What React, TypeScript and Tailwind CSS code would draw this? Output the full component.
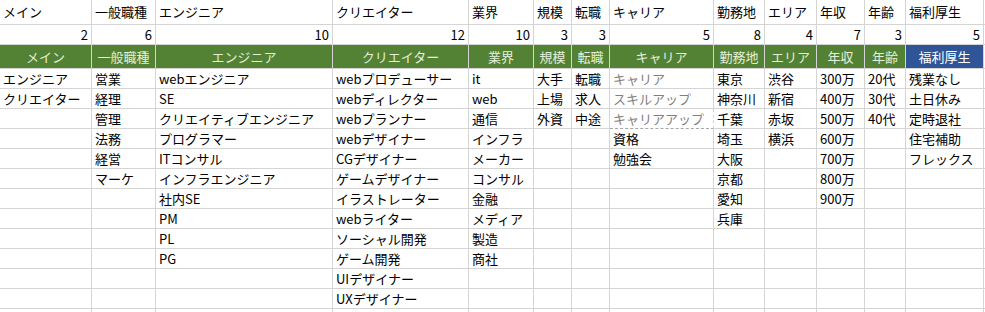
import React from 'react';

/** One column of the sheet: its title and the values listed under it. */
interface Column {
  title: string;
  items: string[];
  muted?: number; // number of leading items drawn in grey
}

const COLUMNS: Column[] = [
  { title: 'メイン', items: ['エンジニア', 'クリエイター'] },
  { title: '一般職種', items: ['営業', '経理', '管理', '法務', '経営', 'マーケ'] },
  {
    title: 'エンジニア',
    items: ['webエンジニア', 'SE', 'クリエイティブエンジニア', 'プログラマー', 'ITコンサル', 'インフラエンジニア', '社内SE', 'PM', 'PL', 'PG']
  },
  {
    title: 'クリエイター',
    items: [
      'webプロデューサー',
      'webディレクター',
      'webプランナー',
      'webデザイナー',
      'CGデザイナー',
      'ゲームデザイナー',
      'イラストレーター',
      'webライター',
      'ソーシャル開発',
      'ゲーム開発',
      'UIデザイナー',
      'UXデザイナー'
    ]
  },
  { title: '業界', items: ['it', 'web', '通信', 'インフラ', 'メーカー', 'コンサル', '金融', 'メディア', '製造', '商社'] },
  { title: '規模', items: ['大手', '上場', '外資'] },
  { title: '転職', items: ['転職', '求人', '中途'] },
  { title: 'キャリア', items: ['キャリア', 'スキルアップ', 'キャリアアップ', '資格', '勉強会'], muted: 3 },
  { title: '勤務地', items: ['東京', '神奈川', '千葉', '埼玉', '大阪', '京都', '愛知', '兵庫'] },
  { title: 'エリア', items: ['渋谷', '新宿', '赤坂', '横浜'] },
  { title: '年収', items: ['300万', '400万', '500万', '600万', '700万', '800万', '900万'] },
  { title: '年齢', items: ['20代', '30代', '40代'] },
  { title: '福利厚生', items: ['残業なし', '土日休み', '定時退社', '住宅補助', 'フレックス'] }
];

const DATA_ROWS = 13;

const cell = 'flex items-center border-r border-b border-[#d4d4d4] px-[3px] whitespace-nowrap overflow-hidden';

export default function App() {
  return (
    <div
      className="h-[312px] w-[985px] overflow-hidden bg-white text-[13px] text-black"
      style={{ fontFamily: '"Noto Sans CJK JP", "Noto Sans", sans-serif' }}
    >
      <div className="grid grid-cols-[92px_64px_177px_136px_65px_38px_38px_104px_51px_52px_48px_41px_78px_1fr] grid-rows-[25px_20px_24px_repeat(13,20px)]">
        {/* titles */}
        {COLUMNS.map((col) => (
          <div key={`t-${col.title}`} className={cell}>
            {col.title}
          </div>
        ))}
        <div className={cell} />

        {/* counts */}
        {COLUMNS.map((col) => (
          <div key={`c-${col.title}`} className={`${cell} justify-end`}>
            {col.items.length}
          </div>
        ))}
        <div className={cell} />

        {/* coloured header row */}
        {COLUMNS.map((col, i) => {
          const last = i === COLUMNS.length - 1;
          return (
            <div
              key={`h-${col.title}`}
              className={`${cell} justify-center ${
                last
                  ? 'bg-[#2f5597] border-[#2f5597] text-white'
                  : 'bg-[#548235] border-[#548235] text-[#e2efda]'
              }`}
            >
              {col.title}
            </div>
          );
        })}
        <div className={cell} />

        {/* values */}
        {Array.from({ length: DATA_ROWS }).map((_, r) => (
          <React.Fragment key={`r-${r}`}>
            {COLUMNS.map((col) => {
              const value = col.items[r] ?? '';
              const muted = col.muted !== undefined && r < col.muted;
              const dashed = col.title === 'キャリア' && r === 2;
              return (
                <div
                  key={`${col.title}-${r}`}
                  className={`${cell} ${muted ? 'text-[#7f7f7f]' : ''} ${
                    dashed ? 'border-b-[#a6a6a6] border-dashed border-r-[#d4d4d4]' : ''
                  }`}
                >
                  {value}
                </div>
              );
            })}
            <div className={cell} />
          </React.Fragment>
        ))}
      </div>
    </div>
  );
}
